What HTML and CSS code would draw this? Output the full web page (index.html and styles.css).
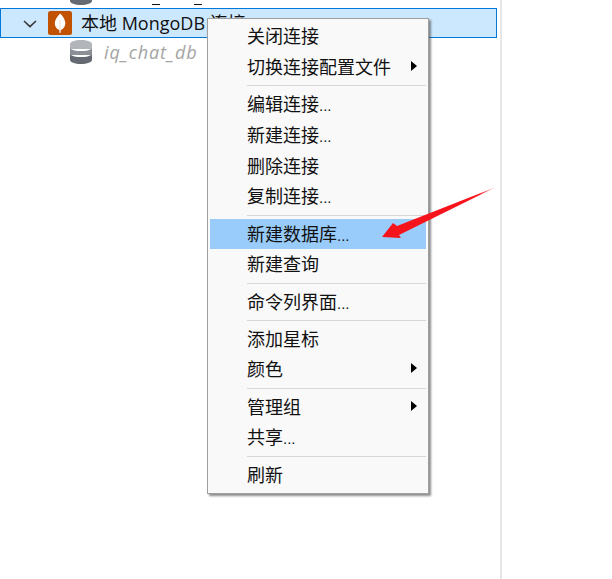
FILE: index.html
```html
<!DOCTYPE html>
<html lang="zh-CN">
<head>
<meta charset="utf-8">
<title>MongoDB</title>
<link rel="stylesheet" href="styles.css">
</head>
<body>
<div class="page">
  <div class="tree">
    <div class="row-clip">
      <svg class="db db-clipped" viewBox="0 0 22 24" width="22" height="24"><use href="#db"/></svg>
      <span class="us us-a"></span>
      <span class="us us-b"></span>
    </div>
    <div class="row-selected">
      <svg class="chevron" viewBox="0 0 14 8" width="14" height="8"><path d="M1 1l6 5.600L13 1" fill="none" stroke="#333" stroke-width="1.500"/></svg>
      <svg class="logo" viewBox="0 0 24 24" width="24" height="24">
        <rect width="24" height="24" rx="2.500" fill="#c05200"/>
        <path d="M12.200 2.500c3.400 3.500 5.300 6.900 5.100 10.200-.2 3.300-2.400 5.400-4.500 6.300L12.500 22h-.9l-.2-3C9.200 18.100 6.900 16 6.800 12.700 6.700 9.500 8.500 6.200 12.200 2.500z" fill="#fff"/>
        <path d="M12 9v13" stroke="#e8c4a8" stroke-width=".6"/>
      </svg>
      <span class="conn-name">本地 MongoDB 连接</span>
    </div>
    <div class="row-db">
      <svg class="db" viewBox="0 0 22 24" width="22" height="24">
        <defs>
          <g id="db">
            <path d="M0 4c0-2.200 4.900-4 11-4s11 1.800 11 4v5H0z" fill="#b2b6bb"/>
            <path d="M0 8.500c2 1.700 6 2.600 11 2.600s9-.9 11-2.600v6.500H0z" fill="#8b9097"/>
            <path d="M0 14.500c2 1.700 6 2.600 11 2.600s9-.9 11-2.600V20c0 2.200-4.900 4-11 4S0 22.200 0 20z" fill="#656a72"/>
          </g>
        </defs>
        <use href="#db"/>
      </svg>
      <span class="db-name">iq_chat_db</span>
    </div>
  </div>
  <div class="divider"></div>

  <div class="menu">
    <div class="item">关闭连接</div>
    <div class="item has-sub">切换连接配置文件<span class="caret"></span></div>
    <div class="sep"></div>
    <div class="item">编辑连接<span class="dots">...</span></div>
    <div class="item">新建连接<span class="dots">...</span></div>
    <div class="item">删除连接</div>
    <div class="item">复制连接<span class="dots">...</span></div>
    <div class="sep"></div>
    <div class="item active">新建数据库<span class="dots">...</span></div>
    <div class="item">新建查询</div>
    <div class="sep"></div>
    <div class="item">命令列界面<span class="dots">...</span></div>
    <div class="sep"></div>
    <div class="item">添加星标</div>
    <div class="item has-sub">颜色<span class="caret"></span></div>
    <div class="sep"></div>
    <div class="item has-sub">管理组<span class="caret"></span></div>
    <div class="item">共享<span class="dots">...</span></div>
    <div class="sep"></div>
    <div class="item">刷新</div>
  </div>

  <svg class="arrow" viewBox="0 0 120 55" width="120" height="55">
    <defs>
      <linearGradient id="fade" x1="0" y1="1" x2="1" y2="0">
        <stop offset="0" stop-color="#f5141c"/>
        <stop offset=".85" stop-color="#f8141c"/>
        <stop offset="1" stop-color="#ffc8c8"/>
      </linearGradient>
    </defs>
    <path d="M2 53 L13 39 L17 42 L116 3 L19 51 L21 54 Z" fill="url(#fade)"/>
  </svg>
</div>
</body>
</html>
```
FILE: styles.css
```css
* { box-sizing: border-box; }
html, body { margin: 0; padding: 0; background: #fff; }
.page {
  position: relative;
  width: 612px;
  height: 579px;
  overflow: hidden;
  font-family: "Noto Sans CJK SC", "Liberation Sans", sans-serif;
  color: #1a1a1a;
}
.tree { width: 497px; }
.row-clip {
  position: relative;
  height: 8px;
  overflow: hidden;
}
.db-clipped { position: absolute; left: 70px; top: -19px; }
.us { position: absolute; top: 4px; width: 8px; height: 1px; background: #111; }
.us-a { left: 152px; }
.us-b { left: 194px; }
.row-selected {
  display: flex;
  align-items: center;
  height: 30px;
  background: #cce8ff;
  border: 1px solid #0078d7;
  padding-left: 22px;
}
.chevron { flex: none; margin-right: 11px; margin-top: 1px; }
.logo { flex: none; margin-right: 9px; }
.conn-name {
  font-family: "Open Sans", "Noto Sans CJK SC", sans-serif;
  font-size: 18px;
  line-height: 28px;
  color: #111;
  white-space: nowrap;
}
.row-db {
  display: flex;
  align-items: center;
  height: 30px;
  padding-left: 70px;
}
.db { flex: none; margin-right: 12px; margin-bottom: 2px; }
.db-name {
  font-family: "Open Sans", "Liberation Sans", sans-serif;
  font-style: italic;
  font-size: 18px;
  letter-spacing: .9px;
  margin-bottom: 2px;
  color: #a4a4a4;
}
.divider {
  position: absolute;
  left: 500px;
  top: 0;
  width: 2px;
  height: 579px;
  background: #e6e6e6;
}
.menu {
  position: absolute;
  left: 207px;
  top: 18px;
  width: 222px;
  height: 476px;
  padding: 2px 2px;
  background: #f9f9f9;
  border: 1px solid #a0a0a0;
  box-shadow: 2px 2px 2px rgba(80, 80, 80, .65);
}
.item {
  position: relative;
  height: 30.800px;
  padding-left: 37px;
  font-size: 18px;
  line-height: 29px;
  color: #111;
  white-space: nowrap;
}
.item.active { background: #99ccfb; }
.dots {
  font-family: "Liberation Sans", sans-serif;
  font-size: 15px;
}
.sep {
  height: 1px;
  margin: 2.700px 0 2.700px 37px;
  background: #d7d7d7;
}
.caret {
  position: absolute;
  right: 9px;
  top: 9px;
  width: 0;
  height: 0;
  border-style: solid;
  border-width: 5.500px 0 5.500px 6px;
  border-color: transparent transparent transparent #000;
}
.arrow { position: absolute; left: 380px; top: 184px; }
```
